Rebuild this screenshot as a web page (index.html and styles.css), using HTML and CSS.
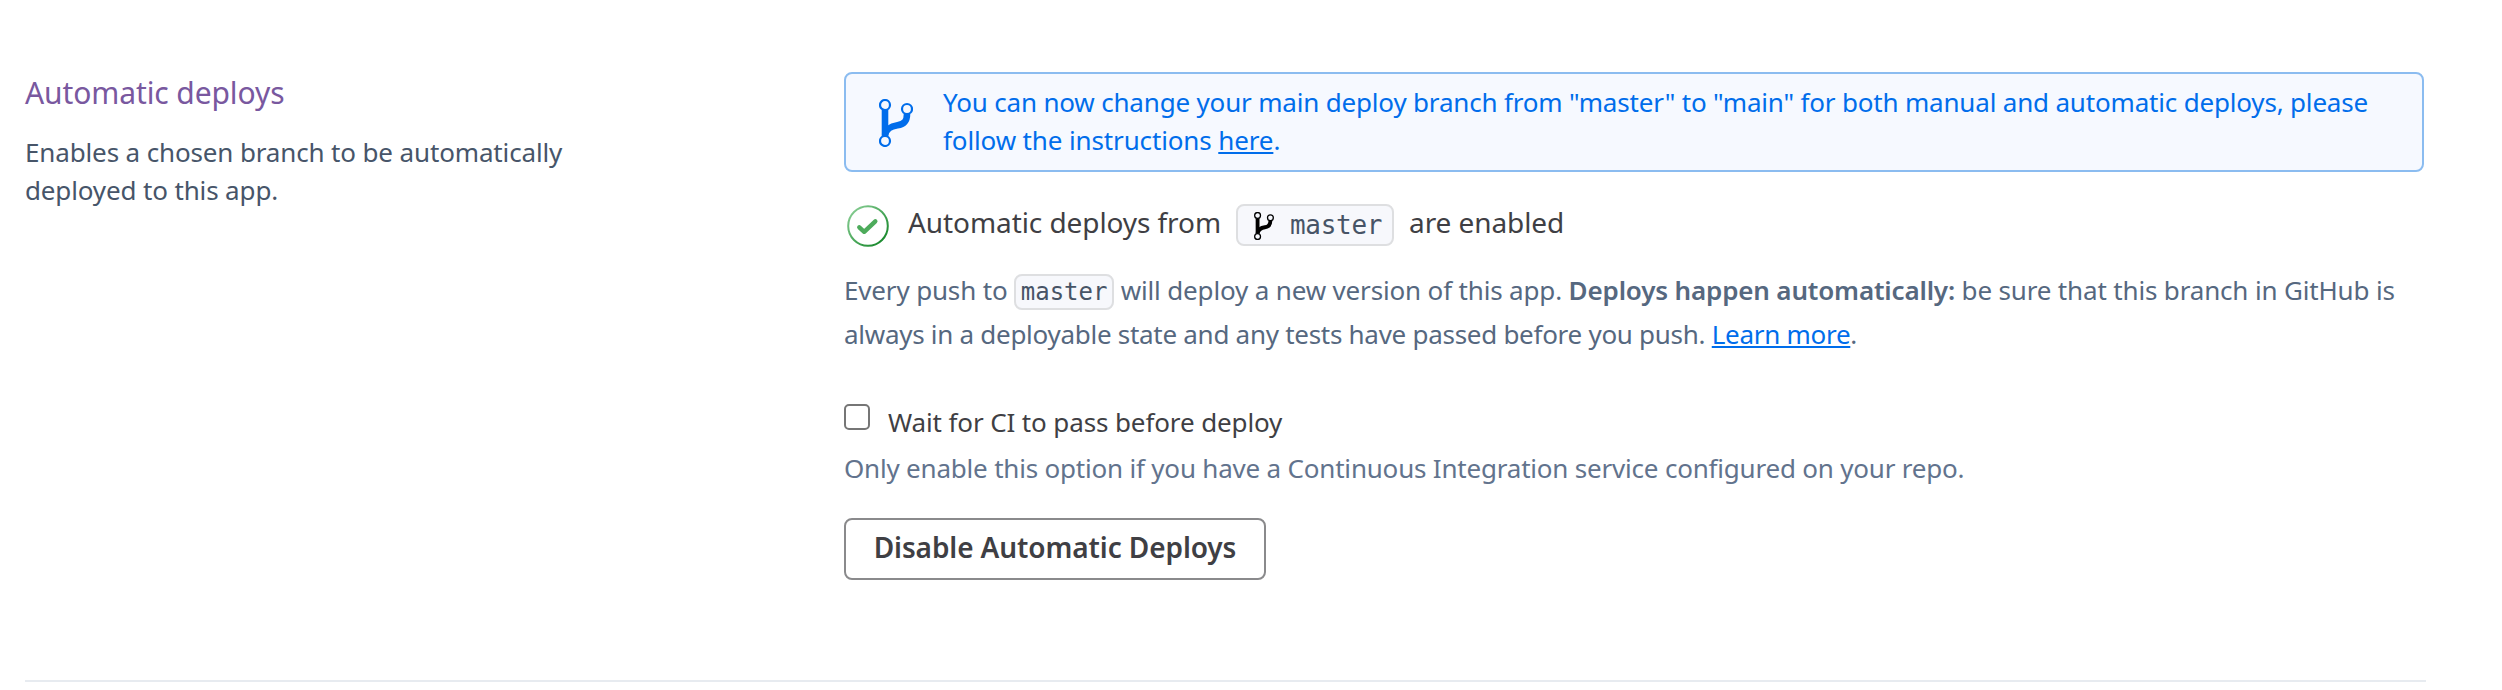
FILE: index.html
```html
<!DOCTYPE html>
<html lang="en">
<head>
<meta charset="utf-8">
<title>Automatic deploys</title>
<link rel="stylesheet" href="styles.css">
</head>
<body>
<svg class="defs" width="0" height="0" aria-hidden="true">
  <symbol id="branch" viewBox="0 0 34 48">
    <g fill="none" stroke="currentColor">
      <path stroke-width="6.6" d="M6 10.5V38"/>
      <path stroke-width="6.6" d="M28 15C28 22 25.5 25.3 18.5 26.2C11.500 27.200 7.500 29.500 6 36"/>
      <circle cx="6" cy="6" r="5" stroke-width="2.2" class="node"/>
      <circle cx="28" cy="10" r="5" stroke-width="2.2" class="node"/>
      <circle cx="6" cy="42" r="5" stroke-width="2.2" class="node"/>
    </g>
  </symbol>
</svg>
<section class="panel">
  <header class="intro">
    <h2 class="title">Automatic deploys</h2>
    <p class="desc">Enables a chosen branch to be automatically<br>deployed to this app.</p>
  </header>
  <div class="content">
    <div class="alert">
      <svg class="alert-icon"><use href="#branch"/></svg>
      <p class="alert-text">You can now change your main deploy branch from "master" to "main" for both manual and automatic deploys, please<br><span class="alert-second">follow the instructions <a class="link" href="#">here</a>.</span></p>
    </div>
    <div class="status">
      <svg class="status-icon" viewBox="0 0 42 42" fill="none">
        <defs><linearGradient id="ring" x1="0" y1="0" x2="1" y2="1"><stop offset="0.1" stop-color="#84cb90"/><stop offset="0.9" stop-color="#17882b"/></linearGradient></defs>
        <circle cx="21" cy="21" r="19.8" stroke="url(#ring)" stroke-width="2"/>
        <path d="M12.300 22.300L17.200 26.800L28.300 16.300" stroke="#4dab5b" stroke-width="4.400" stroke-linecap="round" stroke-linejoin="round"/>
      </svg>
      <span class="status-text">Automatic deploys from</span>
      <span class="branch-pill"><svg class="branch-icon"><use href="#branch"/></svg>master</span>
      <span class="status-text">are enabled</span>
    </div>
    <p class="info">Every push to <code class="code">master</code> will deploy a new version of this app. <strong class="strong">Deploys happen automatically:</strong> be sure that this branch in GitHub is<br><span class="info-second">always in a deployable state and any tests have passed before you push. <a class="link" href="#">Learn more</a>.</span></p>
    <label class="check"><input class="checkbox" type="checkbox"><span>Wait for CI to pass before deploy</span></label>
    <p class="hint">Only enable this option if you have a Continuous Integration service configured on your repo.</p>
    <button class="button" type="button">Disable Automatic Deploys</button>
  </div>
</section>
</body>
</html>
```
FILE: styles.css
```css
* { box-sizing: border-box; }
body {
  margin: 0;
  background: #fff;
  font: 26px/38px "Noto Sans", sans-serif;
}
p, h2 { margin: 0; }
.defs { position: absolute; }
.panel {
  display: flex;
  width: 2401px;
  margin-left: 25px;
  padding: 72px 0 100px;
  border-bottom: 2px solid #e7ebf0;
}
.intro { width: 819px; flex: none; padding-top: 1px; }
.title {
  margin-bottom: 20px;
  font-size: 30px;
  line-height: 40px;
  font-weight: 400;
  letter-spacing: -0.1px;
  color: #79589f;
}
.desc { letter-spacing: -0.14px; color: #475569; }
.content { width: 1580px; }
.alert {
  display: flex;
  height: 100px;
  padding: 9px 0 0 33px;
  border: 2px solid #8bbcf0;
  border-radius: 8px;
  background: #f6f9ff;
  color: #006deb;
}
.alert-icon {
  width: 34px;
  height: 48px;
  margin: 16px 30px 0 0;
}
.node { fill: #f7f9fe; }
.alert-text { letter-spacing: -0.18px; white-space: nowrap; }
.alert-second { letter-spacing: -0.13px; }
.link {
  color: #006deb;
  text-decoration: underline;
  text-decoration-thickness: 2px;
  text-underline-offset: 2px;
}
.status {
  display: flex;
  align-items: flex-start;
  height: 42px;
  margin-top: 32px;
  padding-left: 3px;
}
.status-icon { width: 42px; height: 42px; margin: 1px 19px 0 0; }
.status-text {
  font-size: 28px;
  line-height: 36px;
  letter-spacing: -0.08px;
  color: #3f3f44;
}
.branch-pill {
  display: flex;
  width: 158px;
  height: 42px;
  margin: 0 15px 0 15px;
  padding-left: 16px;
  border: 2px solid #dedfe1;
  border-radius: 8px;
  background: #f7f8fc;
  font: 26px/38px "DejaVu Sans Mono", monospace;
  letter-spacing: -0.3px;
  color: #475466;
}
.branch-icon {
  width: 20px;
  height: 28px;
  margin: 6px 16px 0 0;
  color: #000;
}
.info {
  margin-top: 22px;
  line-height: 44px;
  letter-spacing: -0.16px;
  white-space: nowrap;
  color: #56687f;
}
.code {
  padding: 2px 4.700px;
  border: 2px solid #dedfe1;
  border-radius: 8px;
  background: #f7f8fc;
  font: 24px "DejaVu Sans Mono", monospace;
  letter-spacing: 0;
  color: #475466;
}
.strong { font-weight: 600; }
.info-second { letter-spacing: -0.28px; }
.check {
  display: flex;
  height: 36px;
  margin-top: 48px;
  line-height: 36px;
  letter-spacing: -0.12px;
  color: #3f3f44;
}
.checkbox {
  appearance: none;
  width: 26px;
  height: 26px;
  margin: 0 18px 0 0;
  border: 2px solid #767676;
  border-radius: 5px;
  background: #fff;
}
.hint {
  margin-top: 10px;
  line-height: 36px;
  letter-spacing: -0.2px;
  color: #62738d;
}
.button {
  display: block;
  width: 422px;
  height: 62px;
  margin-top: 32px;
  padding: 0 0 3px;
  border: 2px solid #8a8a8c;
  border-radius: 8px;
  background: #fff;
  font: 600 28px/55px "Noto Sans", sans-serif;
  letter-spacing: -0.1px;
  color: #3f3f44;
}
```
